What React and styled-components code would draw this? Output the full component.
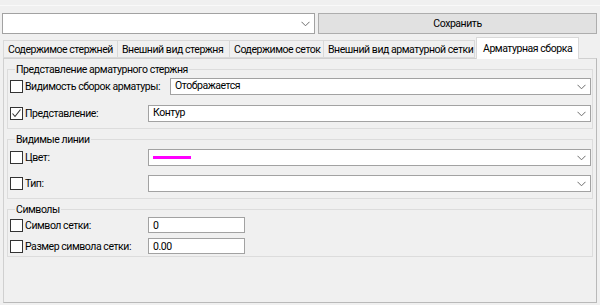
import React from 'react';
import styled, { createGlobalStyle } from 'styled-components';

const GlobalStyle = createGlobalStyle`
    html, body {
        margin: 0;
        padding: 0;
        background: #f0f0f0;
    }
    body {
        font-family: Roboto, 'Liberation Sans', sans-serif;
        font-size: 10.5px;
        letter-spacing: -0.45px;
        color: #000;
    }
`;

const Window = styled.div`
    width: 600px;
    height: 305px;
    box-sizing: border-box;
    background: #f0f0f0;
    padding-top: 5px;
    overflow: hidden;
`;

const TopLine = styled.div`
    height: 1px;
    background: #f9f9f9;
    margin-bottom: 7px;
`;

const Toolbar = styled.div`
    display: flex;
    align-items: stretch;
    height: 21px;
    padding: 0 3px 0 2px;
    gap: 3px;
`;

const Combo = styled.div`
    position: relative;
    display: flex;
    align-items: center;
    box-sizing: border-box;
    width: ${(p) => (p.width ? `${p.width}px` : 'auto')};
    flex: ${(p) => (p.width ? 'none' : '1')};
    height: ${(p) => p.height || 17}px;
    background: #fff;
    border: 1px solid #a2a2a2;
    padding: 0 18px 0 4px;
    line-height: 1;
    white-space: nowrap;
`;

const Chevron = styled.svg`
    position: absolute;
    right: 4px;
    top: 50%;
    margin-top: -3px;
`;

const SaveButton = styled.button`
    flex: 1;
    box-sizing: border-box;
    height: 21px;
    background: #e1e1e1;
    border: 1px solid #adadad;
    font: inherit;
    letter-spacing: inherit;
    color: #000;
    padding: 0;
`;

const TabStrip = styled.div`
    display: flex;
    align-items: flex-end;
    height: 21px;
    margin-top: 3px;
    padding-left: 3px;
    position: relative;
    z-index: 1;
`;

const Tab = styled.div`
    box-sizing: border-box;
    width: ${(p) => p.width}px;
    height: ${(p) => (p.active ? 22 : 18)}px;
    margin-bottom: ${(p) => (p.active ? -1 : 0)}px;
    margin-left: ${(p) => (p.active ? 1 : 0)}px;
    display: flex;
    align-items: center;
    padding-left: ${(p) => (p.active ? 6 : 4)}px;
    background: ${(p) => (p.active ? '#fff' : '#f0f0f0')};
    border: 1px solid #d9d9d9;
    border-bottom: ${(p) => (p.active ? 'none' : '1px solid #d9d9d9')};
    border-left: ${(p) => (p.first || p.active ? '1px solid #d9d9d9' : 'none')};
    white-space: nowrap;
    overflow: hidden;
`;

const Panel = styled.div`
    box-sizing: border-box;
    margin: 0 3px 0 3px;
    height: 245px;
    border: 1px solid #d0d0d0;
    border-right-color: #b9b9b9;
    border-bottom-color: #b9b9b9;
    padding: 4px 3px 0 3px;
    display: flex;
    flex-direction: column;
    gap: 4px;
`;

const Group = styled.fieldset`
    margin: 0;
    border: 1px solid #dcdcdc;
    padding: ${(p) => p.padTop}px 1px ${(p) => p.padBottom}px 2px;
    display: flex;
    flex-direction: column;
    gap: ${(p) => p.gap}px;
    min-width: 0;
`;

const Legend = styled.legend`
    padding: 0 1px;
    margin-left: 5px;
    line-height: 13px;
`;

const Row = styled.div`
    display: flex;
    align-items: center;
`;

const LabelCell = styled.label`
    display: flex;
    align-items: center;
    width: ${(p) => p.width}px;
    flex: none;
    white-space: nowrap;
`;

const Box = styled.span`
    box-sizing: border-box;
    width: 13px;
    height: 13px;
    border: 1px solid #333;
    background: #fff;
    margin-right: 2px;
    display: flex;
    align-items: center;
    justify-content: center;
    flex: none;
`;

const TextInput = styled.div`
    box-sizing: border-box;
    width: 97px;
    height: 16px;
    background: #fff;
    border: 1px solid #a2a2a2;
    padding-left: 4px;
    display: flex;
    align-items: center;
`;

const ColorSwatch = styled.span`
    display: block;
    width: 38px;
    height: 3px;
    background: #ff00ff;
`;

function ChevronIcon() {
    return (
        <Chevron width='9' height='6' viewBox='0 0 9 6'>
            <polyline points='0.5,0.8 4.5,4.8 8.5,0.8' fill='none' stroke='#6d6d6d' strokeWidth='1' />
        </Chevron>
    );
}

function CheckBox({ checked }) {
    return (
        <Box>
            {checked && (
                <svg width='11' height='11' viewBox='0 0 11 11'>
                    <polyline points='1.5,5.5 4,8.5 9.5,1.5' fill='none' stroke='#333' strokeWidth='1.1' />
                </svg>
            )}
        </Box>
    );
}

const tabs = [
    { title: 'Содержимое стержней', width: 115, first: true },
    { title: 'Внешний вид стержня', width: 112 },
    { title: 'Содержимое сеток', width: 94 },
    { title: 'Внешний вид арматурной сетки', width: 151 },
    { title: 'Арматурная сборка', width: 103, active: true },
];

function App() {
    return (
        <>
            <GlobalStyle />
            <Window>
                <TopLine />
                <Toolbar>
                    <Combo width={313} height={21}>
                        <ChevronIcon />
                    </Combo>
                    <SaveButton type='button'>Сохранить</SaveButton>
                </Toolbar>
                <TabStrip>
                    {tabs.map((t) => (
                        <Tab key={t.title} width={t.width} active={t.active} first={t.first}>
                            {t.title}
                        </Tab>
                    ))}
                </TabStrip>
                <Panel>
                    <Group padTop={2} padBottom={6} gap={10}>
                        <Legend>Представление арматурного стержня</Legend>
                        <Row>
                            <LabelCell width={160}>
                                <CheckBox />
                                Видимость сборок арматуры:
                            </LabelCell>
                            <Combo>
                                Отображается
                                <ChevronIcon />
                            </Combo>
                        </Row>
                        <Row>
                            <LabelCell width={138}>
                                <CheckBox checked />
                                Представление:
                            </LabelCell>
                            <Combo>
                                Контур
                                <ChevronIcon />
                            </Combo>
                        </Row>
                    </Group>
                    <Group padTop={3} padBottom={6} gap={9}>
                        <Legend>Видимые линии</Legend>
                        <Row>
                            <LabelCell width={138}>
                                <CheckBox />
                                Цвет:
                            </LabelCell>
                            <Combo>
                                <ColorSwatch />
                                <ChevronIcon />
                            </Combo>
                        </Row>
                        <Row>
                            <LabelCell width={138}>
                                <CheckBox />
                                Тип:
                            </LabelCell>
                            <Combo>
                                <ChevronIcon />
                            </Combo>
                        </Row>
                    </Group>
                    <Group padTop={1} padBottom={2} gap={5}>
                        <Legend>Символы</Legend>
                        <Row>
                            <LabelCell width={138}>
                                <CheckBox />
                                Символ сетки:
                            </LabelCell>
                            <TextInput>0</TextInput>
                        </Row>
                        <Row>
                            <LabelCell width={138}>
                                <CheckBox />
                                Размер символа сетки:
                            </LabelCell>
                            <TextInput>0.00</TextInput>
                        </Row>
                    </Group>
                </Panel>
            </Window>
        </>
    );
}

export default App;
